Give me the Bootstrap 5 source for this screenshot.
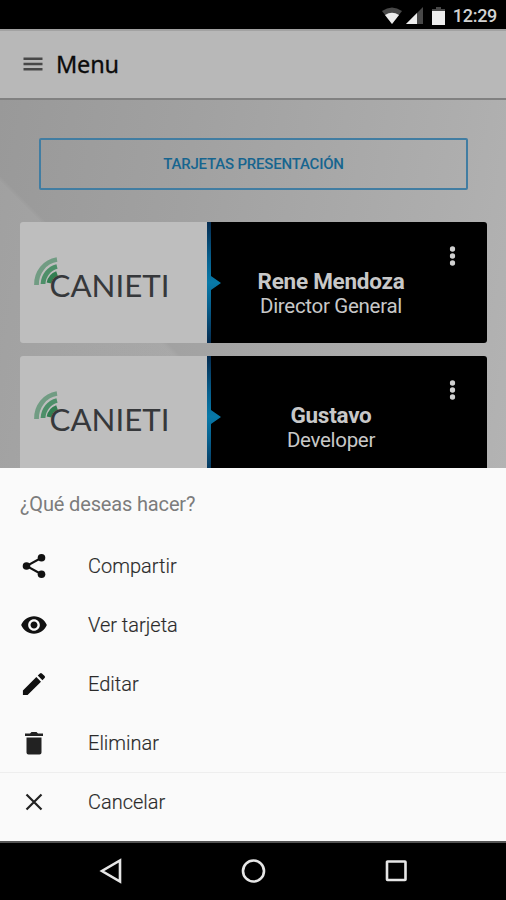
<!DOCTYPE html>
<html lang="es">
<head>
<meta charset="utf-8">
<meta name="viewport" content="width=device-width, initial-scale=1">
<title>Menu</title>
<link href="https://cdn.jsdelivr.net/npm/bootstrap@5.3.0/dist/css/bootstrap.min.css" rel="stylesheet">
<style>
body { font-family: Roboto, "Liberation Sans", sans-serif; line-height: 1; }
svg { display: block; flex: none; }
.screen { height: 900px; }
.status { height: 29px; background: #000; color: #d2d2d2; padding: 2px 9px 0 0; font-size: 18px; font-weight: 500; letter-spacing: -.3px; }
.topbar { height: 71px; background: #b8b8b8; padding: 0 23px; border-top: 2px solid #a2a2a2; border-bottom: 2px solid #818181; }
.topbar h1 { font-family: "Noto Sans", sans-serif; font-size: 23.5px; font-weight: 400; color: #0b0b0b; -webkit-text-stroke: .3px #0b0b0b; line-height: 1; margin-left: 13px; letter-spacing: -.2px; }
.backdrop-area { height: 368px; padding: 38px 19px 0 20px;
  background: linear-gradient(225deg, transparent 0 66.5%, rgba(255,255,255,.07) 67.2%), linear-gradient(100deg, #999 0%, #a1a1a1 35%, #adadad 80%, #b3b3b3 100%); }
.btn-cards { height: 52px; margin: 0 19px 32px 19px; border: 2px solid #417da2; border-radius: 2px; color: #17658f; font-size: 15px; font-weight: 500; letter-spacing: -.2px; padding: 0; }
.contact { height: 121px; margin-bottom: 13px; border-radius: 3px; }
.contact-logo { width: 187px; background: #bebebe; }
.contact-info { background: #000; color: #c8c8c8; padding-right: 20px; }
.stripe { width: 14px; }
.person { padding: 47px 0 0 3px; }
.person strong { font-size: 22.5px; line-height: 25px; letter-spacing: -.25px; }
.person span { font-size: 20.5px; line-height: 24px; letter-spacing: -.3px; }
.sheet { height: 373px; background: #fafafa; padding-top: 4px; color: #2a2a2a; }
.sheet-title { height: 64px; padding-left: 20px; font-size: 20px; color: #7c7c7c; letter-spacing: -.15px; }
.action { height: 59px; padding: 0 20px; font-size: 20px; gap: 40px; font-weight: 300; -webkit-text-stroke: .15px #2a2a2a; }
.sheet .last { border-top: 1px solid #eee; }
.navkeys { height: 59px; background: #000; border-top: 2px solid #555; padding-bottom: 2px; }
</style>
</head>
<body>
<svg width="0" height="0" class="position-absolute" aria-hidden="true">
  <defs>
    <linearGradient id="blue" x1="0" y1="0" x2="0" y2="1"><stop offset="0" stop-color="#062c50"/><stop offset=".3" stop-color="#075f8d"/><stop offset=".5" stop-color="#0879a8"/><stop offset=".7" stop-color="#075f8d"/><stop offset="1" stop-color="#062c50"/></linearGradient>
    <symbol id="logo" viewBox="0 0 187 121">
      <g fill="none" stroke-width="4.800">
        <path d="M16.500 63A24 25 0 0 1 37 37.500" stroke="#719c83"/>
        <path d="M23 62A18 19 0 0 1 37 44.500" stroke="#4d8f69"/>
        <path d="M29 61A12 13 0 0 1 37 51.500" stroke="#327e52"/>
      </g>
      <text x="29.500" y="74.500" textLength="120" lengthAdjust="spacingAndGlyphs" font-family="Lato, sans-serif" font-size="30" fill="#36383b">CANIETI</text>
    </symbol>
    <symbol id="edge" viewBox="0 0 14 121"><path fill="url(#blue)" d="M0 0H4V54L14 61L4 68V121H0Z"/></symbol>
    <symbol id="more" viewBox="0 0 6 20"><g fill="#d0d0d0"><circle cx="3" cy="3" r="2.700"/><circle cx="3" cy="10" r="2.700"/><circle cx="3" cy="17" r="2.700"/></g></symbol>
  </defs>
</svg>
<main class="screen d-flex flex-column overflow-hidden">
  <div class="status d-flex align-items-center justify-content-end">
    <svg width="20" height="18" viewBox="0 0 20 18"><path fill="#484848" d="M0 4Q10-3 20 4L10 17Z"/><path fill="#ededed" d="M3 8Q10 3.500 17 8L10 17Z"/></svg>
    <svg class="ms-1" width="18" height="18" viewBox="0 0 18 18"><path fill="#484848" d="M0 17L17 0V17Z"/><path fill="#ededed" d="M0 17L11 6V17Z"/></svg>
    <svg class="mx-2" width="13" height="18" viewBox="0 0 13 18"><path fill="#484848" d="M4 0H9V2H13V6H0V2H4Z"/><path fill="#ededed" d="M0 4H13V18H0Z"/></svg>
    <span>12:29</span>
  </div>
  <header class="topbar d-flex align-items-center">
    <svg width="20" height="16" viewBox="0 0 20 16"><path stroke="#484848" stroke-width="2.400" d="M.5 1.800H19.500M.5 7H19.500M.5 12.200H19.500"/></svg>
    <h1 class="mb-0">Menu</h1>
  </header>
  <section class="backdrop-area overflow-hidden">
    <div class="d-grid"><button class="btn btn-cards" type="button">TARJETAS PRESENTACIÓN</button></div>
    <article class="contact d-flex overflow-hidden">
      <div class="contact-logo"><svg width="187" height="121"><use href="#logo"/></svg></div>
      <div class="contact-info d-flex flex-grow-1">
        <svg class="stripe" height="121"><use href="#edge"/></svg>
        <div class="person d-flex flex-column align-items-center flex-grow-1"><strong>Rene Mendoza</strong><span>Director General</span></div>
        <svg class="mt-4" width="29" height="20" viewBox="0 0 29 20"><use href="#more" width="6" height="20" x="11.500"/></svg>
      </div>
    </article>
    <article class="contact d-flex overflow-hidden">
      <div class="contact-logo"><svg width="187" height="121"><use href="#logo"/></svg></div>
      <div class="contact-info d-flex flex-grow-1">
        <svg class="stripe" height="121"><use href="#edge"/></svg>
        <div class="person d-flex flex-column align-items-center flex-grow-1"><strong>Gustavo</strong><span>Developer</span></div>
        <svg class="mt-4" width="29" height="20" viewBox="0 0 29 20"><use href="#more" width="6" height="20" x="11.500"/></svg>
      </div>
    </article>
  </section>
  <section class="sheet">
    <div class="sheet-title d-flex align-items-center">¿Qué deseas hacer?</div>
    <div class="action d-flex align-items-center">
      <svg width="28" height="28" viewBox="0 0 28 28"><path fill="none" stroke="#111" stroke-width="2" d="M22 5.500L6.500 14L22 22.500"/><g fill="#111"><circle cx="21.500" cy="5.800" r="3.800"/><circle cx="6.500" cy="14" r="3.800"/><circle cx="21.500" cy="22.200" r="3.800"/></g></svg>
      <span>Compartir</span>
    </div>
    <div class="action d-flex align-items-center">
      <svg width="28" height="28" viewBox="0 0 24 24"><path fill="#111" d="M12 4.500C7 4.500 2.730 7.610 1 12c1.730 4.390 6 7.500 11 7.500s9.270-3.110 11-7.500c-1.730-4.390-6-7.500-11-7.500zM12 17c-2.760 0-5-2.240-5-5s2.240-5 5-5 5 2.240 5 5-2.240 5-5 5zm0-8c-1.660 0-3 1.340-3 3s1.340 3 3 3 3-1.340 3-3-1.340-3-3-3z"/></svg>
      <span>Ver tarjeta</span>
    </div>
    <div class="action d-flex align-items-center">
      <svg width="28" height="28" viewBox="0 0 24 24"><path fill="#111" d="M2.500 17.500V21.500H6.500L18 10l-4-4zM21.100 6.900a1.200 1.200 0 0 0 0-1.700l-2.300-2.300a1.200 1.200 0 0 0-1.700 0L15.200 4.800l4 4z"/></svg>
      <span>Editar</span>
    </div>
    <div class="action d-flex align-items-center">
      <svg width="28" height="28" viewBox="0 0 28 28"><path fill="#222" d="M6.500 8.500H21.500V23.500Q21.500 25.500 19.500 25.500H8.500Q6.500 25.500 6.500 23.500ZM5 4.500H10L11.500 3H16.500L18 4.500H23V7H5Z"/></svg>
      <span>Eliminar</span>
    </div>
    <div class="action last d-flex align-items-center">
      <svg width="28" height="28" viewBox="0 0 28 28"><path stroke="#222" stroke-width="2.200" d="M6.500 6.500L21.500 21.500M21.500 6.500L6.500 21.500"/></svg>
      <span>Cancelar</span>
    </div>
  </section>
  <nav class="navkeys d-flex align-items-center justify-content-center">
    <svg width="310" height="28" viewBox="0 0 310 28"><g fill="none" stroke="#e6e6e6" stroke-width="2.600"><path d="M22 3.500V24.500L4 14Z"/><circle cx="155.500" cy="14" r="10.500"/><rect x="289" y="4.500" width="18.500" height="18.500" rx=".5"/></g></svg>
  </nav>
</main>
<script src="https://cdn.jsdelivr.net/npm/bootstrap@5.3.0/dist/js/bootstrap.bundle.min.js"></script>
</body>
</html>
